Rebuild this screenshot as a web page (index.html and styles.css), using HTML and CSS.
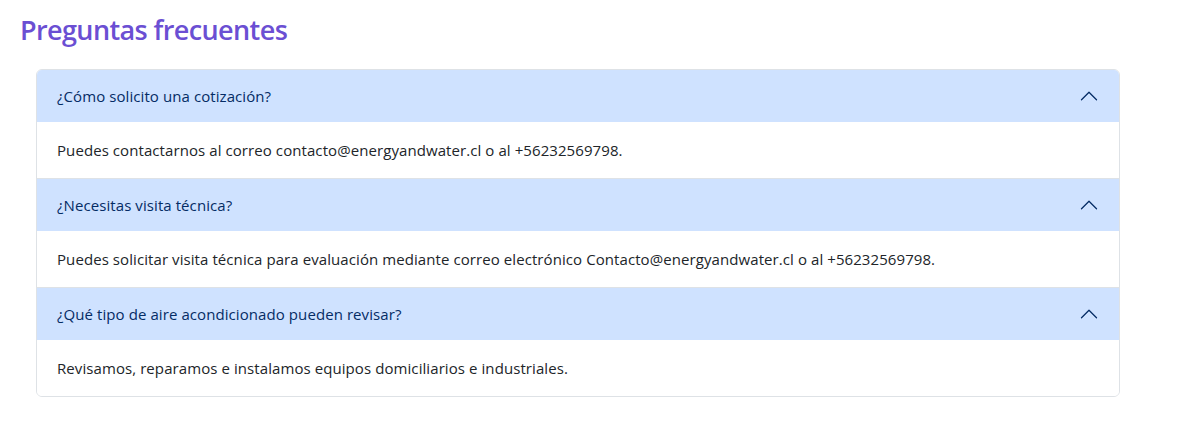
FILE: index.html
```html
<!DOCTYPE html>
<html lang="es">
<head>
<meta charset="utf-8">
<link rel="stylesheet" href="styles.css">
</head>
<body>
<main class="page">
  <h2 class="title">Preguntas frecuentes</h2>
  <div class="accordion">
    <div class="item">
      <div class="header">
        <span>¿Cómo solicito una cotización?</span>
        <svg class="chev" viewBox="0 0 16 16" width="20" height="20"><path d="M2 11L8 5L14 11" fill="none" stroke="#052c65" stroke-width="1.05" stroke-linecap="round" stroke-linejoin="round"/></svg>
      </div>
      <div class="body">Puedes contactarnos al correo contacto@energyandwater.cl o al +56232569798.</div>
    </div>
    <div class="item">
      <div class="header">
        <span>¿Necesitas visita técnica?</span>
        <svg class="chev" viewBox="0 0 16 16" width="20" height="20"><path d="M2 11L8 5L14 11" fill="none" stroke="#052c65" stroke-width="1.05" stroke-linecap="round" stroke-linejoin="round"/></svg>
      </div>
      <div class="body">Puedes solicitar visita técnica para evaluación mediante correo electrónico Contacto@energyandwater.cl o al +56232569798.</div>
    </div>
    <div class="item">
      <div class="header">
        <span>¿Qué tipo de aire acondicionado pueden revisar?</span>
        <svg class="chev" viewBox="0 0 16 16" width="20" height="20"><path d="M2 11L8 5L14 11" fill="none" stroke="#052c65" stroke-width="1.05" stroke-linecap="round" stroke-linejoin="round"/></svg>
      </div>
      <div class="body">Revisamos, reparamos e instalamos equipos domiciliarios e industriales.</div>
    </div>
  </div>
</main>
</body>
</html>
```

FILE: styles.css
```css
* { box-sizing: border-box; }
html, body { margin: 0; background: #fff; }
body {
  font-family: "Open Sans", "Noto Sans", sans-serif;
  font-size: 15px;
  line-height: 24px;
  letter-spacing: 0.08px;
  color: #212529;
}
.page {
  padding: 12px 66px 0 20px;
}
.title {
  margin: 0 0 21px 0;
  font-size: 27px;
  line-height: 36px;
  font-weight: 600;
  letter-spacing: -0.6px;
  color: #6b4fd3;
}
.accordion {
  margin-left: 16px;
  width: 1084px;
  border: 1px solid #dee2e6;
  border-radius: 6px;
  overflow: hidden;
}
.item + .item {
  border-top: 1px solid #dee2e6;
}
.header {
  display: flex;
  align-items: center;
  justify-content: space-between;
  height: 52px;
  padding: 0 20px;
  background: #cfe2ff;
  color: #052c65;
}
.chev { display: block; flex: none; }
.body {
  height: 56px;
  padding: 16px 20px;
  background: #fff;
}
```
